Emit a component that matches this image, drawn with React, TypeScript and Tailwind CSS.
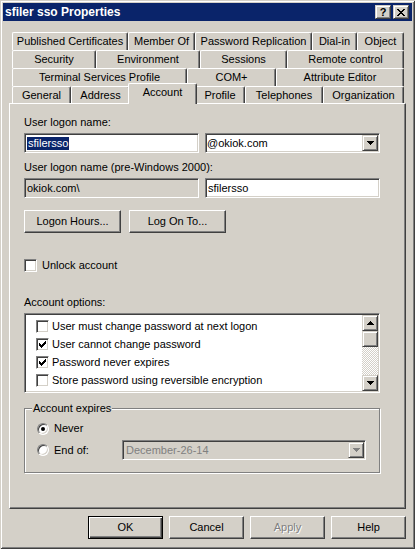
import React from 'react';

// classic 3d borders
const raised =
  'border border-t-white border-l-white border-r-[#404040] border-b-[#404040] shadow-[inset_-1px_-1px_0_#808080]';
const raisedSmall =
  'border border-t-[#d4d0c8] border-l-[#d4d0c8] border-r-[#404040] border-b-[#404040] shadow-[inset_1px_1px_0_#ffffff,inset_-1px_-1px_0_#808080]';
const sunken =
  'border border-t-[#808080] border-l-[#808080] border-r-white border-b-white shadow-[inset_1px_1px_0_#404040,inset_-1px_-1px_0_#d4d0c8]';

const tabRows: { label: string; w: string }[][] = [
  [
    { label: 'Published Certificates', w: 'w-[116px]' },
    { label: 'Member Of', w: 'w-[67px]' },
    { label: 'Password Replication', w: 'w-[117px]' },
    { label: 'Dial-in', w: 'w-[45px]' },
    { label: 'Object', w: 'w-[47px]' },
  ],
  [
    { label: 'Security', w: 'w-[84px]' },
    { label: 'Environment', w: 'w-[104px]' },
    { label: 'Sessions', w: 'w-[87px]' },
    { label: 'Remote control', w: 'w-[117px]' },
  ],
  [
    { label: 'Terminal Services Profile', w: 'w-[175px]' },
    { label: 'COM+', w: 'w-[89px]' },
    { label: 'Attribute Editor', w: 'w-[128px]' },
  ],
];

const frontTabs = [
  { label: 'General', w: 'w-[59px]' },
  { label: 'Address', w: 'w-[59px]' },
  { label: 'Account', w: 'w-[69px]', selected: true },
  { label: 'Profile', w: 'w-[50px]' },
  { label: 'Telephones', w: 'w-[78px]' },
  { label: 'Organization', w: 'w-[81px]' },
];

const options = [
  { label: 'User must change password at next logon', checked: false },
  { label: 'User cannot change password', checked: true },
  { label: 'Password never expires', checked: true },
  { label: 'Store password using reversible encryption', checked: false },
];

const tabClass =
  'flex shrink-0 items-center justify-center rounded-t-[2px] border-t border-l border-r border-t-white border-l-white border-r-[#404040] shadow-[inset_-1px_0_0_#808080] whitespace-nowrap';

const Arrow = ({ up = false, color = '#000' }: { up?: boolean; color?: string }) => (
  <svg width="7" height="4" viewBox="0 0 7 4" shapeRendering="crispEdges">
    <path
      d={up ? 'M3 0h1v1H3zM2 1h3v1H2zM1 2h5v1H1zM0 3h7v1H0z' : 'M0 0h7v1H0zM1 1h5v1H1zM2 2h3v1H2zM3 3h1v1H3z'}
      fill={color}
    />
  </svg>
);

const Check = ({ checked = false }: { checked?: boolean }) => (
  <span className={`${sunken} flex h-[13px] w-[13px] shrink-0 items-center justify-center bg-white`}>
    {checked && (
      <svg width="7" height="7" viewBox="0 0 7 7" shapeRendering="crispEdges">
        <path
          d="M0 2h1v3H0zM1 3h1v3H1zM2 4h1v3H2zM3 3h1v3H3zM4 2h1v3H4zM5 1h1v3H5zM6 0h1v3H6z"
          fill="#000"
        />
      </svg>
    )}
  </span>
);

const Radio = ({ on = false }: { on?: boolean }) => (
  <span className="flex h-[12px] w-[12px] shrink-0 items-center justify-center rounded-full border border-t-[#808080] border-l-[#808080] border-r-white border-b-white bg-white shadow-[inset_1px_1px_0_#404040,inset_-1px_-1px_0_#d4d0c8]">
    {on && <span className="h-[4px] w-[4px] rounded-full bg-black" />}
  </span>
);

const Button = ({ children, w, disabled = false }: { children: React.ReactNode; w: string; disabled?: boolean }) => (
  <div className={`${raised} flex h-[23px] ${w} items-center justify-center bg-[#d4d0c8]`}>
    <span className={disabled ? 'text-[#808080] [text-shadow:1px_1px_0_#ffffff]' : ''}>{children}</span>
  </div>
);

export default function App() {
  return (
    <div className="h-[549px] w-[415px] overflow-hidden bg-[#d4d0c8] p-[3px] font-['Liberation_Sans',Arial,sans-serif] text-[11px] leading-[13px] text-black shadow-[inset_1px_1px_0_#d4d0c8,inset_-1px_-1px_0_#404040,inset_2px_2px_0_#ffffff,inset_-2px_-2px_0_#808080]">
      {/* title bar */}
      <div className="flex h-[18px] items-center justify-between bg-[#0a246a] pl-[2px] pr-[3px]">
        <span className="text-[12px] font-bold text-white">sfiler sso Properties</span>
        <div className="flex gap-[2px]">
          <div className={`${raisedSmall} flex h-[14px] w-[16px] items-center justify-center bg-[#d4d0c8] text-[11px] font-bold leading-none`}>
            ?
          </div>
          <div className={`${raisedSmall} flex h-[14px] w-[16px] items-center justify-center bg-[#d4d0c8]`}>
            <svg width="8" height="7" viewBox="0 0 8 7" shapeRendering="crispEdges">
              <path
                d="M0 0h2v1H0zM6 0h2v1H6zM1 1h2v1H1zM5 1h2v1H5zM2 2h4v1H2zM3 3h2v1H3zM2 4h4v1H2zM1 5h2v1H1zM5 5h2v1H5zM0 6h2v1H0zM6 6h2v1H6z"
                fill="#000"
              />
            </svg>
          </div>
        </div>
      </div>

      {/* tabs */}
      <div className="ml-[6px] mt-[11px] w-[397px]">
        {tabRows.map((row, i) => (
          <div key={i} className="ml-[3px] flex h-[18px] w-[392px]">
            {row.map((t) => (
              <div key={t.label} className={`${tabClass} ${t.w} h-[18px]`}>
                {t.label}
              </div>
            ))}
          </div>
        ))}
        <div className="ml-[3px] flex h-[17px] w-[392px] items-end">
          {frontTabs.map((t) =>
            t.selected ? (
              <div
                key={t.label}
                className={`${tabClass} ${t.w} relative z-10 -mx-[2px] -mb-px h-[21px] bg-[#d4d0c8] pb-[3px]`}
              >
                {t.label}
              </div>
            ) : (
              <div key={t.label} className={`${tabClass} ${t.w} h-[17px]`}>
                {t.label}
              </div>
            )
          )}
        </div>

        {/* panel */}
        <div className="flex h-[406px] w-[397px] flex-col border border-t-white border-l-white border-r-[#404040] border-b-[#404040] pl-[14px] pt-[12px] shadow-[inset_-1px_-1px_0_#808080]">
          <div className="h-[13px]">User logon name:</div>
          <div className="mt-[4px] flex gap-[6px]">
            <div className={`${sunken} flex h-[20px] w-[175px] items-center bg-white pl-[2px]`}>
              <span className="bg-[#0a246a] px-px text-white">sfilersso</span>
            </div>
            <div className={`${sunken} flex h-[20px] w-[175px] items-center bg-white p-px`}>
              <span className="flex-1">@okiok.com</span>
              <div className={`${raisedSmall} flex h-[16px] w-[16px] items-center justify-center bg-[#d4d0c8]`}>
                <Arrow />
              </div>
            </div>
          </div>

          <div className="mt-[8px] h-[13px]">User logon name (pre-Windows 2000):</div>
          <div className="mt-[4px] flex gap-[6px]">
            <div className={`${sunken} flex h-[20px] w-[175px] items-center bg-[#d4d0c8] pl-[2px]`}>okiok.com\</div>
            <div className={`${sunken} flex h-[20px] w-[175px] items-center bg-white pl-[2px]`}>sfilersso</div>
          </div>

          <div className="mt-[12px] flex gap-[8px]">
            <Button w="w-[97px]">Logon Hours...</Button>
            <Button w="w-[97px]">Log On To...</Button>
          </div>

          <div className="mt-[26px] flex h-[13px] items-center gap-[5px]">
            <Check />
            <span>Unlock account</span>
          </div>

          <div className="mt-[24px] h-[13px]">Account options:</div>
          <div className={`${sunken} mt-[4px] flex h-[80px] w-[356px] bg-white p-px`}>
            <div className="flex flex-1 flex-col pl-[10px] pt-[2px]">
              {options.map((o) => (
                <div key={o.label} className="flex h-[18px] items-center gap-[3px]">
                  <Check checked={o.checked} />
                  <span>{o.label}</span>
                </div>
              ))}
            </div>
            <div className="flex w-[16px] flex-col">
              <div className={`${raisedSmall} flex h-[16px] items-center justify-center bg-[#d4d0c8]`}>
                <Arrow up />
              </div>
              <div className={`${raisedSmall} h-[16px] bg-[#d4d0c8]`} />
              <div className="flex-1 bg-[image:repeating-conic-gradient(#ffffff_0_25%,#d4d0c8_0_50%)] bg-[length:2px_2px]" />
              <div className={`${raisedSmall} flex h-[16px] items-center justify-center bg-[#d4d0c8]`}>
                <Arrow />
              </div>
            </div>
          </div>

          {/* account expires group */}
          <div className="relative mt-[15px] flex h-[65px] w-[356px] flex-col border border-[#808080] pl-[12px] pt-[13px] shadow-[inset_1px_1px_0_#ffffff,1px_1px_0_#ffffff]">
            <span className="absolute -top-[7px] left-[7px] bg-[#d4d0c8] px-px">Account expires</span>
            <div className="flex h-[13px] items-center gap-[5px]">
              <Radio on />
              <span>Never</span>
            </div>
            <div className="mt-[5px] flex h-[20px] items-center">
              <div className="flex w-[85px] items-center gap-[5px]">
                <Radio />
                <span>End of:</span>
              </div>
              <div className={`${sunken} flex h-[20px] w-[244px] items-center bg-[#d4d0c8] p-px`}>
                <span className="flex-1 pl-[2px] text-[#808080]">December-26-14</span>
                <div className={`${raisedSmall} flex h-[16px] w-[16px] items-center justify-center bg-[#d4d0c8]`}>
                  <Arrow color="#808080" />
                </div>
              </div>
            </div>
          </div>
        </div>
      </div>

      {/* footer buttons */}
      <div className="mt-[7px] flex justify-end gap-[6px] pr-[6px]">
        <div className="flex h-[23px] w-[75px] items-center justify-center border border-black bg-[#d4d0c8] shadow-[inset_1px_1px_0_#ffffff,inset_-1px_-1px_0_#404040,inset_-2px_-2px_0_#808080]">
          OK
        </div>
        <Button w="w-[75px]">Cancel</Button>
        <Button w="w-[75px]" disabled>
          Apply
        </Button>
        <Button w="w-[75px]">Help</Button>
      </div>
    </div>
  );
}
